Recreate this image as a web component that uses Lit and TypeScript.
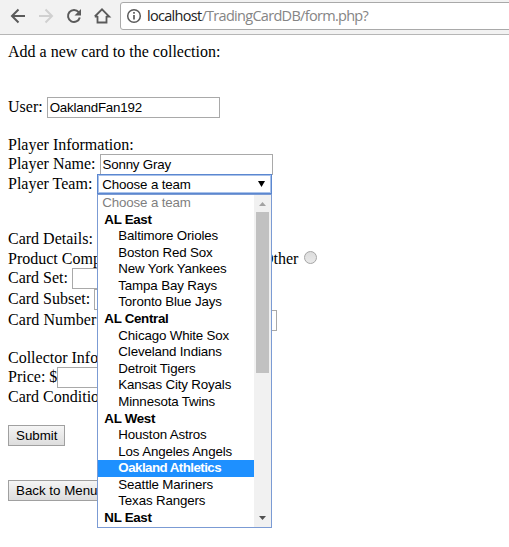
import { LitElement, html, css } from "lit";
import { customElement } from "lit/decorators.js";
import { classMap } from "lit/directives/class-map.js";

type Item = { text: string; kind: "hint" | "group" | "team"; active?: boolean };

const group = (name: string, teams: string[]): Item[] => [
  { text: name, kind: "group" },
  ...teams.map((text): Item => ({ text, kind: "team", active: text === "Oakland Athletics" })),
];

const ITEMS: Item[] = [
  { text: "Choose a team", kind: "hint" },
  ...group("AL East", ["Baltimore Orioles", "Boston Red Sox", "New York Yankees", "Tampa Bay Rays", "Toronto Blue Jays"]),
  ...group("AL Central", ["Chicago White Sox", "Cleveland Indians", "Detroit Tigers", "Kansas City Royals", "Minnesota Twins"]),
  ...group("AL West", ["Houston Astros", "Los Angeles Angels", "Oakland Athletics", "Seattle Mariners", "Texas Rangers"]),
  ...group("NL East", []),
];

@customElement("browser-bar")
class BrowserBar extends LitElement {
  static styles = css`
    :host { display: flex; height: 34px; background: #f2f2f2; border-bottom: 1px solid #b6b6b6; }
    .nav { width: 120px; height: 34px; flex: none; }
    .address { flex: 1; display: flex; height: 26px; margin: 2px -4px 0 0; border: 1px solid #a9a9a9; border-radius: 3px; background: #fff; }
    .info { width: 26px; height: 26px; flex: none; }
    .url { font: 14.5px/26px "Open Sans", sans-serif; letter-spacing: -0.7px; color: #858585; white-space: nowrap; }
    .host { color: #222; }
  `;
  render() {
    return html`
      <svg class="nav" viewBox="0 0 120 34" fill="none" stroke="#5a5a5a" stroke-width="2">
        <path d="M25 16H12.5M18.500 9.500L12 16l6.500 6.500" />
        <path stroke="#d0d0d0" d="M39 16H51.500M45.500 9.500L52 16l-6.500 6.500" />
        <path d="M78.700 12.200A6 6 0 1 0 79.800 17.500" />
        <path fill="#5a5a5a" stroke="none" d="M81 9v6.500h-6.500z" />
        <path d="M97.500 16v6.500h9V16M94.800 16.500L102 9.300l7.200 7.200H106.500M97.500 16.500H94.800" stroke-width="1.800" />
      </svg>
      <div class="address">
        <svg class="info" viewBox="0 0 26 26" fill="none" stroke="#5a5a5a">
          <circle cx="13" cy="13" r="6.300" stroke-width="1.500" />
          <path d="M13 12v4.500M13 9v1.800" stroke-width="1.700" />
        </svg>
        <div class="url"><span class="host">localhost</span>/TradingCardDB/form.php?</div>
      </div>`;
  }
}

@customElement("team-select")
class TeamSelect extends LitElement {
  static styles = css`
    :host { display: block; position: relative; width: 175px; margin-left: 1px; white-space: normal; font: 13.333px/16px "Liberation Sans", Arial, sans-serif; letter-spacing: -0.15px; color: #000; }
    .box { box-sizing: border-box; height: 20px; border: 1px solid #5b87d0; box-shadow: inset 0 0 0 1px #a9c2ea; display: flex; justify-content: space-between; padding: 1px 6px 0 4px; line-height: 17px; }
    .arrow { width: 7px; height: 6px; margin-top: 5px; }
    .menu { position: absolute; left: 0; top: 20px; z-index: 2; box-sizing: border-box; width: 175px; height: 334px; border: 1px solid #7b9bd4; background: #fff; display: flex; overflow: hidden; }
    .list { flex: 1; }
    .item { height: 16.580px; line-height: 16px; white-space: nowrap; }
    .hint { color: #7f7f7f; padding-left: 4px; }
    .group { font-weight: bold; padding-left: 6px; letter-spacing: -0.3px; }
    .team { padding-left: 20px; }
    .active { background: #1e90ff; color: #fff; font-weight: bold; letter-spacing: -0.55px; }
    .bar { width: 17px; background: #f1f1f1; display: flex; flex-direction: column; }
    .cap { width: 17px; height: 17px; }
    .thumb { width: 13px; height: 161px; margin-left: 2px; background: #c1c1c1; }
    .gap { flex: 1; }
  `;
  render() {
    return html`
      <div class="box">Choose a team<svg class="arrow" viewBox="0 0 7 6"><path d="M0 0h7L3.500 6z" /></svg></div>
      <div class="menu">
        <div class="list">
          ${ITEMS.map((i) => html`<div class=${classMap({ item: true, [i.kind]: true, active: !!i.active })}>${i.text}</div>`)}
        </div>
        <div class="bar">
          <svg class="cap" viewBox="0 0 17 17"><path fill="#a3a3a3" d="M5 11L8.500 7l3.500 4z" /></svg>
          <div class="thumb"></div>
          <div class="gap"></div>
          <svg class="cap" viewBox="0 0 17 17"><path fill="#505050" d="M5 6h7L8.500 10z" /></svg>
        </div>
      </div>`;
  }
}

@customElement("app-root")
class AppRoot extends LitElement {
  static styles = css`
    :host { display: block; width: 509px; height: 547px; overflow: hidden; background: #fff; color: #000; font: 16px/18px "Liberation Serif", "Times New Roman", serif; }
    .page { padding: 8px 8px 0; display: flex; flex-direction: column; align-items: flex-start; }
    .row { display: flex; height: 18px; white-space: pre; }
    .field { height: 21px; }
    .name { height: 20px; }
    .label { padding-top: 1px; }
    .input { box-sizing: border-box; width: 173px; height: 21px; border: 1px solid #a9a9a9; background: #fff; padding: 0 2px; font: 13.333px/19px "Liberation Sans", Arial, sans-serif; letter-spacing: -0.2px; }
    .short { width: 57px; }
    .h20 { height: 20px; }
    .after-36 { margin-bottom: 36px; }
    .after-18 { margin-bottom: 18px; }
    .after-19 { margin-bottom: 19px; }
    .after-34 { margin-bottom: 34px; }
    .number { letter-spacing: 0.07px; margin-right: -1px; }
    .other { margin-left: 18px; }
    .radio { box-sizing: border-box; width: 13px; height: 13px; margin: 1px 0 0 5.500px; border: 1px solid #a5a5a5; border-radius: 50%; background: linear-gradient(#dcdcdc, #e9e9e9); }
    .button { box-sizing: border-box; height: 21px; border: 1px solid #a0a0a0; background: linear-gradient(#f5f5f5, #dddddd); padding: 0 7px; font: 13.333px/19px "Liberation Sans", Arial, sans-serif; white-space: nowrap; }
  `;
  render() {
    return html`
      <browser-bar></browser-bar>
      <div class="page">
        <div class="row after-36">Add a new card to the collection:</div>
        <div class="row field after-18"><span class="label">User: </span><div class="input">OaklandFan192</div></div>
        <div class="row">Player Information:</div>
        <div class="row name"><span class="label">Player Name: </span><div class="input">Sonny Gray</div></div>
        <div class="row h20 after-36"><span class="label">Player Team: </span><team-select></team-select></div>
        <div class="row h20">Card Details:</div>
        <div class="row">Product Company: Topps    Panini    <span class="other">Other</span><span class="radio"></span></div>
        <div class="row field"><span class="label">Card Set: </span><div class="input"></div></div>
        <div class="row field"><span class="label">Card Subset: </span><div class="input"></div></div>
        <div class="row field after-18"><span class="label number">Card Number: </span><div class="input"></div></div>
        <div class="row">Collector Information:</div>
        <div class="row field"><span class="label">Price: $</span><div class="input short"></div></div>
        <div class="row after-19">Card Condition:</div>
        <div class="button after-34">Submit</div>
        <div class="button">Back to Menu</div>
      </div>`;
  }
}
